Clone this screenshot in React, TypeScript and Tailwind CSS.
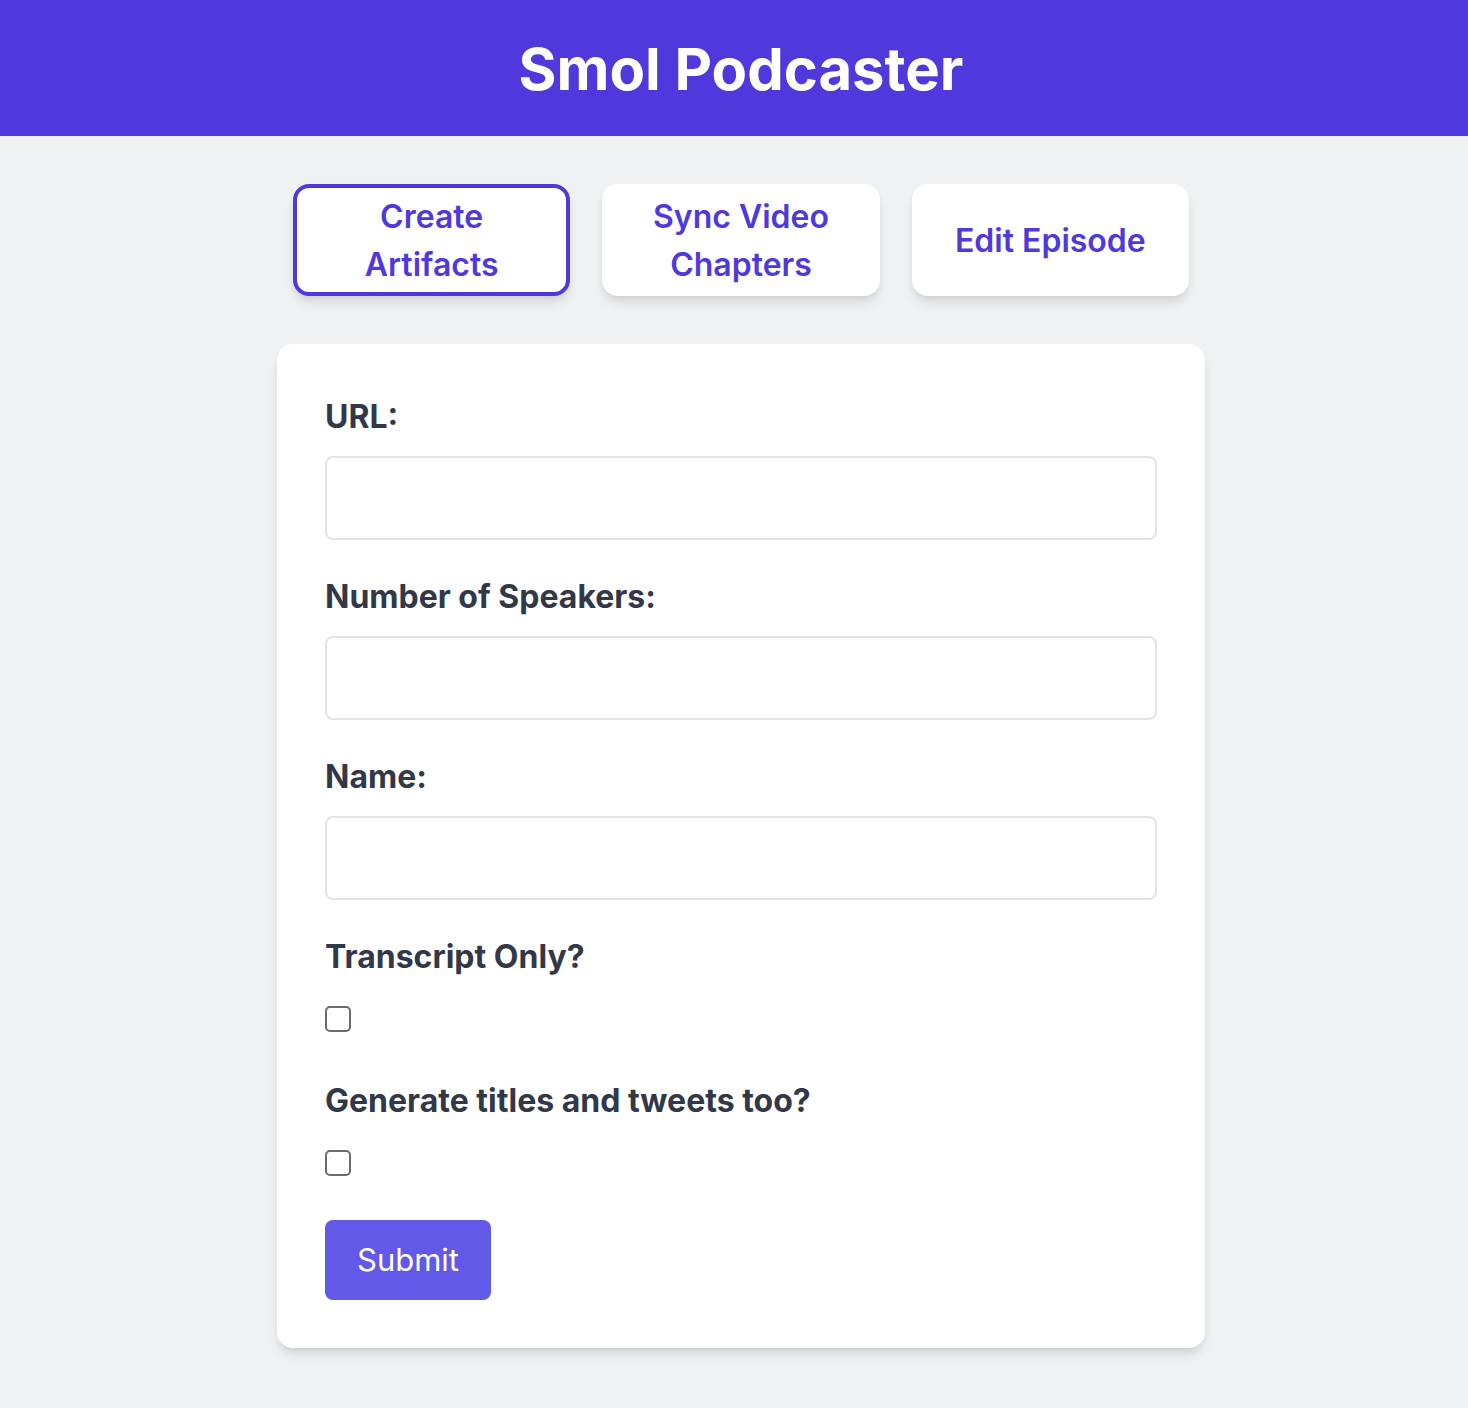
import React from "react";

const tabs = ["Create Artifacts", "Sync Video Chapters", "Edit Episode"];

function TextField({ id, label, type = "text" }: { id: string; label: string; type?: string }) {
  return (
    <div className="mb-8">
      <label htmlFor={id} className="mb-[14px] block leading-[50px] font-bold text-[#323848]">
        {label}
      </label>
      <input
        id={id}
        name={id}
        type={type}
        className="block h-[84px] w-full rounded-lg border-2 border-[#e2e2e8] bg-white px-4 outline-none focus:border-indigo-500"
      />
    </div>
  );
}

function CheckField({ id, label }: { id: string; label: string }) {
  return (
    <div className="mb-8">
      <label htmlFor={id} className="mb-[14px] block leading-[50px] font-bold text-[#323848]">
        {label}
      </label>
      <div className="flex h-12 items-center pb-0.5">
        <input
          id={id}
          name={id}
          type="checkbox"
          className="size-[26px] appearance-none rounded-[5px] border-2 border-[#6b6b6b] bg-white checked:bg-indigo-600"
        />
      </div>
    </div>
  );
}

export default function App() {
  const [active, setActive] = React.useState(0);
  return (
    <div className="min-h-screen bg-[#f0f1f3] pb-15 font-['Inter',sans-serif] text-[32px] leading-12">
      <header className="bg-[#4f39dc] pt-[33px] pb-[31px] pl-[14px] text-center">
        <h1 className="text-[58px] leading-[72px] font-bold text-white">Smol Podcaster</h1>
      </header>
      <main className="pt-12 pl-[14px]">
        <div className="mx-auto w-full max-w-[928px]">
          <nav className="mb-12 grid grid-cols-3 gap-8 px-4">
            {tabs.map((tab, i) => (
              <button
                key={tab}
                type="button"
                onClick={() => setActive(i)}
                className={
                  "flex h-28 items-center justify-center rounded-2xl border-4 bg-white px-8 pt-0.5 text-center font-semibold text-[#4f39dc] shadow-[0_8px_12px_-2px_rgba(0,0,0,0.1),0_4px_8px_-4px_rgba(0,0,0,0.1)] " +
                  (i === active ? "border-[#4f39dc]" : "border-white")
                }
              >
                {tab}
              </button>
            ))}
          </nav>
          <form
            className="rounded-2xl bg-white p-12 shadow-[0_8px_12px_-2px_rgba(0,0,0,0.1),0_4px_8px_-4px_rgba(0,0,0,0.1)]"
            onSubmit={(e) => e.preventDefault()}
          >
            <TextField id="url" label="URL:" />
            <TextField id="speakers" label="Number of Speakers:" />
            <TextField id="name" label="Name:" />
            <CheckField id="transcript_only" label="Transcript Only?" />
            <CheckField id="generate_extra" label="Generate titles and tweets too?" />
            <button type="submit" className="block rounded-lg bg-[#6259e8] px-8 py-4 text-[31px] text-white">
              Submit
            </button>
          </form>
        </div>
      </main>
    </div>
  );
}
